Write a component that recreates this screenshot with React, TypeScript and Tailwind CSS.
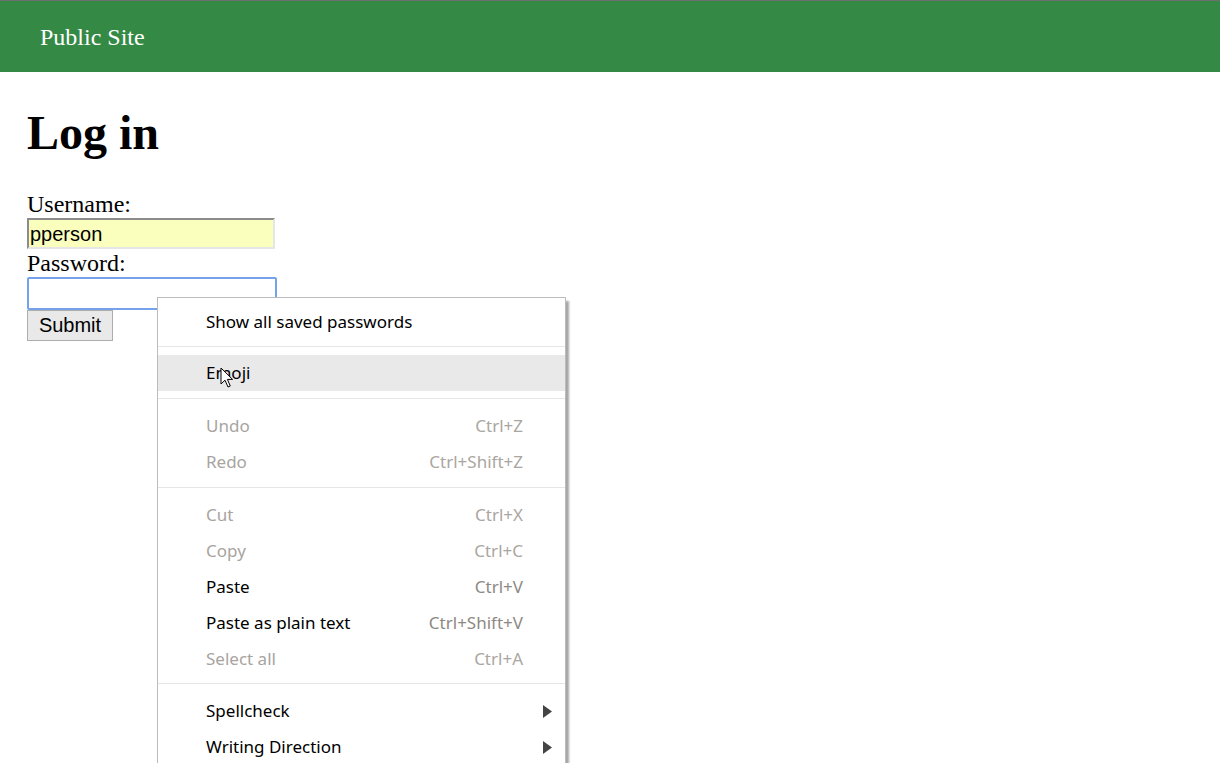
import React from "react";

type Item =
  | { kind: "item"; label: string; shortcut?: string; disabled?: boolean; hover?: boolean; submenu?: boolean }
  | { kind: "sep"; h: string };

const menu: Item[] = [
  { kind: "item", label: "Show all saved passwords" },
  { kind: "sep", h: "h-[15px] pt-[6px]" },
  { kind: "item", label: "Emoji", hover: true },
  { kind: "sep", h: "h-[17px] pt-[7px]" },
  { kind: "item", label: "Undo", shortcut: "Ctrl+Z", disabled: true },
  { kind: "item", label: "Redo", shortcut: "Ctrl+Shift+Z", disabled: true },
  { kind: "sep", h: "h-[17px] pt-[7px]" },
  { kind: "item", label: "Cut", shortcut: "Ctrl+X", disabled: true },
  { kind: "item", label: "Copy", shortcut: "Ctrl+C", disabled: true },
  { kind: "item", label: "Paste", shortcut: "Ctrl+V" },
  { kind: "item", label: "Paste as plain text", shortcut: "Ctrl+Shift+V" },
  { kind: "item", label: "Select all", shortcut: "Ctrl+A", disabled: true },
  { kind: "sep", h: "h-[16px] pt-[6px]" },
  { kind: "item", label: "Spellcheck", submenu: true },
  { kind: "item", label: "Writing Direction", submenu: true },
];

function ContextMenu() {
  return (
    <div className="absolute left-[157px] top-[297px] w-[409px] h-[480px] border border-[#bcbcbc] bg-white pt-[6px] shadow-[3px_4px_2px_rgba(0,0,0,0.35)] font-['Noto_Sans',sans-serif] text-[17px]">
      {menu.map((m, i) => {
        if (m.kind === "sep") {
          return (
            <div key={i} className={m.h}>
              <div className="h-px bg-[#e6e6e6]" />
            </div>
          );
        }
        return (
          <div
            key={i}
            className={[
              "relative flex h-[36px] items-center pl-[48px]",
              m.hover ? "bg-[#e9e9e9]" : "",
              m.submenu ? "pr-[13px]" : "pr-[42px]",
            ].join(" ")}
          >
            <span className={m.disabled ? "text-[#a8a49f]" : "text-black"}>{m.label}</span>
            <span className="flex-1" />
            {m.shortcut ? (
              <span className={m.disabled ? "text-[#aaa6a1]" : "text-[#8e8984]"}>{m.shortcut}</span>
            ) : null}
            {m.submenu ? (
              <svg width="9" height="13" viewBox="0 0 9 13">
                <path d="M0 0 L9 6.5 L0 13 Z" fill="#444" />
              </svg>
            ) : null}
          </div>
        );
      })}
    </div>
  );
}

function Cursor() {
  return (
    <svg className="absolute left-[220px] top-[367px]" width="14" height="22" viewBox="0 0 14 22">
      <path
        d="M1 1 L1 17 L5 13.2 L8 20 L10.3 19 L7.4 12.4 L12.6 12.4 Z"
        fill="white"
        stroke="black"
        strokeWidth="1"
        strokeLinejoin="miter"
      />
    </svg>
  );
}

export default function App() {
  return (
    <div className="relative h-[763px] w-full overflow-hidden bg-white">
      <header className="flex h-[72px] items-center border-t border-[#6e6e6e] bg-[#348945] pl-[40px]">
        <span className="font-['Liberation_Serif',serif] text-[24px] text-white">Public Site</span>
      </header>

      <main className="px-[27px] font-['Liberation_Serif',serif] text-black">
        <h1 className="mt-[34px] text-[48px] font-bold leading-[54px]">Log in</h1>
        <form className="mt-[30px] flex flex-col items-start">
          <label className="text-[24px] leading-[28px]">Username:</label>
          <div className="flex h-[31px] w-[248px] items-center border-2 border-t-[#8c8c8c] border-l-[#8c8c8c] border-r-[#e6e6e6] border-b-[#e6e6e6] bg-[#faffbd] pl-[1px] font-['Liberation_Sans',sans-serif] text-[20px] leading-none">
            pperson
          </div>
          <label className="text-[24px] leading-[28px]">Password:</label>
          <div className="h-[33px] w-[250px] rounded-[2px] border-2 border-[#76a2ec] bg-white" />
          <button
            type="button"
            className="h-[31px] w-[86px] border border-[#adadad] bg-[#e9e9e9] pb-[1px] font-['Liberation_Sans',sans-serif] text-[20px] leading-none text-black"
          >
            Submit
          </button>
        </form>
      </main>

      <ContextMenu />
      <Cursor />
    </div>
  );
}
